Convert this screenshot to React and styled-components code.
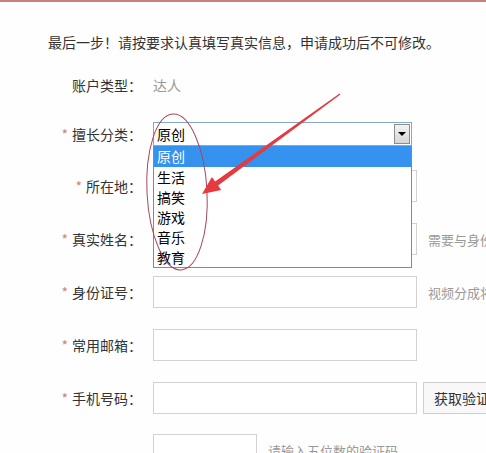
import React from 'react'
import styled, { createGlobalStyle } from 'styled-components'

const GlobalStyle = createGlobalStyle`
  html, body {
    margin: 0;
    padding: 0;
    background: #fff;
  }
  body {
    font-family: "Noto Sans CJK SC", "Noto Sans", "Liberation Sans", sans-serif;
    font-size: 14px;
    color: #333;
  }
`

const Page = styled.div`
  position: relative;
  width: 486px;
  height: 453px;
  box-sizing: border-box;
  border-top: 2px solid #c4817d;
  padding-top: 30px;
  overflow: hidden;
  white-space: nowrap;
  background: #fefefe;
`

const Intro = styled.p`
  margin: 0;
  padding-left: 48px;
  line-height: 20px;
  color: #333;
`

const Form = styled.div`
  display: flex;
  flex-direction: column;
`

const Row = styled.div`
  display: flex;
  align-items: center;
  height: ${(p) => p.$h || 32}px;
  margin-top: ${(p) => p.$mt ?? 21}px;
`

const Label = styled.div`
  width: 142px;
  flex: none;
  text-align: right;
  color: #333;
`

const Star = styled.span`
  color: #c98580;
  margin-right: 4px;
`

const Field = styled.div`
  margin-left: 11px;
  flex: none;
  position: relative;
`

const PlainValue = styled.span`
  color: #999;
`

const SelectBox = styled.div`
  width: 259px;
  height: 24px;
  box-sizing: border-box;
  border: 1px solid #82a9cb;
  background: #fff;
  display: flex;
  align-items: center;
  justify-content: space-between;
  padding: 0 1px 0 3px;
  color: #000;
`

const ArrowBtn = styled.div`
  width: 16px;
  height: 20px;
  box-sizing: border-box;
  border: 1px solid #8d8d8d;
  background: linear-gradient(#f3f3f3, #d6d6d6);
  display: flex;
  align-items: center;
  justify-content: center;

  &::after {
    content: '';
    border-left: 4px solid transparent;
    border-right: 4px solid transparent;
    border-top: 4px solid #000;
  }
`

const OptionList = styled.ul`
  position: absolute;
  top: 24px;
  left: 0;
  width: 259px;
  box-sizing: border-box;
  margin: 0;
  padding: 0;
  list-style: none;
  background: #fff;
  border: 1px solid #7d8c9b;
  border-top: none;
  z-index: 2;
`

const Option = styled.li`
  height: ${(p) => (p.$active ? 21 : 20)}px;
  line-height: ${(p) => (p.$active ? 21 : 20)}px;
  padding-left: 3px;
  color: ${(p) => (p.$active ? '#fff' : '#000')};
  background: ${(p) => (p.$active ? '#3592ef' : 'transparent')};
`

const Input = styled.div`
  width: ${(p) => p.$w || 264}px;
  height: 32px;
  box-sizing: border-box;
  border: 1px solid #d2d2d2;
  background: #fff;
`

const Hint = styled.span`
  margin-left: 11px;
  color: #999;
  font-size: 13px;
`

const CodeButton = styled.div`
  margin-left: 6px;
  height: 32px;
  box-sizing: border-box;
  border: 1px solid #cfcfcf;
  background: #f8f8f8;
  padding: 0 10px;
  display: flex;
  align-items: center;
  color: #333;
`

const Overlay = styled.svg`
  position: absolute;
  top: 0;
  left: 0;
  pointer-events: none;
  z-index: 3;
`

const options = ['原创', '生活', '搞笑', '游戏', '音乐', '教育']

const inputRows = [
  { label: '所在地', mt: 24 },
  { label: '真实姓名', hint: '需要与身份证上的姓名一致' },
  { label: '身份证号', hint: '视频分成将打款至该身份证' },
  { label: '常用邮箱' },
  { label: '手机号码', button: '获取验证码' },
]

function App() {
  return (
    <Page>
      <GlobalStyle />
      <Intro>最后一步！请按要求认真填写真实信息，申请成功后不可修改。</Intro>
      <Form>
        <Row $mt={17}>
          <Label>账户类型：</Label>
          <Field>
            <PlainValue>达人</PlainValue>
          </Field>
        </Row>
        <Row $h={24}>
          <Label>
            <Star>*</Star>擅长分类：
          </Label>
          <Field>
            <SelectBox>
              <span>原创</span>
              <ArrowBtn />
            </SelectBox>
            <OptionList>
              {options.map((o, i) => (
                <Option key={o} $active={i === 0}>
                  {o}
                </Option>
              ))}
            </OptionList>
          </Field>
        </Row>
        {inputRows.map((r) => (
          <Row key={r.label} $mt={r.mt}>
            <Label>
              <Star>*</Star>
              {r.label}：
            </Label>
            <Field>
              <Input />
            </Field>
            {r.hint && <Hint>{r.hint}</Hint>}
            {r.button && <CodeButton>{r.button}</CodeButton>}
          </Row>
        ))}
        <Row $mt={20}>
          <Label />
          <Field>
            <Input $w={104} />
          </Field>
          <Hint>请输入五位数的验证码</Hint>
        </Row>
      </Form>

      {/* annotation: circle round the options and the arrow pointing at them */}
      <Overlay width="486" height="453" viewBox="0 0 486 453">
        <ellipse
          cx="177"
          cy="190"
          rx="30"
          ry="78"
          fill="none"
          stroke="#a8485a"
          strokeWidth="1"
          transform="rotate(-3 177 190)"
        />
        <polygon
          points="339.6,91.5 215.1,179.4 211.9,174.9 202,192 221.3,187.9 218.1,183.4 340.4,92.5"
          fill="#e53a3f"
        />
      </Overlay>
    </Page>
  )
}

export default App
